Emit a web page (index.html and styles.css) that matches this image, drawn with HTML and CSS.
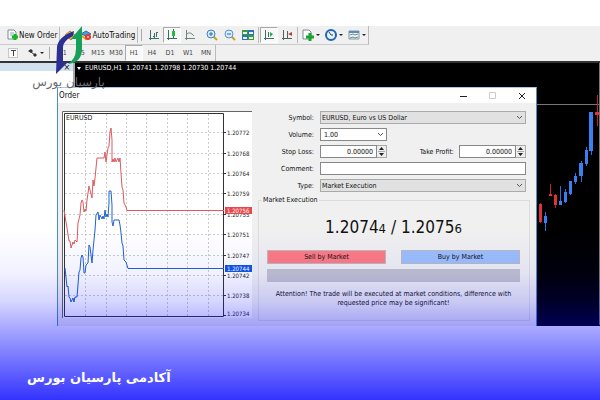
FILE: index.html
```
<!DOCTYPE html>
<html lang="fa">
<head>
  <meta charset="UTF-8">
  <meta name="viewport" content="width=device-width, initial-scale=1.0">
  <title>آکادمی پارسیان بورس</title>
  <link rel="stylesheet" href="styles.css">
</head>
<body>

  <main class="terminal">

    <!-- Main toolbar -->
    <div class="toolbar toolbar-main">
      <button class="tool tool-text">
        <svg width="12" height="12" viewBox="0 0 12 12"><path d="M1 1h6l2 2v7H1z" fill="#fff" stroke="#7c8a99"/><path d="M3 4h4M3 6h3" stroke="#8aa" /><path d="M8 5v6M5 8h6" stroke="#18b52b" stroke-width="3"/></svg>
        New Order
      </button>
      <span class="sep"></span>
      <button class="tool" aria-label="MetaEditor">
        <svg width="12" height="12" viewBox="0 0 12 12"><path d="M1 6l5-4 5 4-4 5z" fill="#f4b942" stroke="#b9801e"/><path d="M4 6l4 1" stroke="#fff2b0"/></svg>
      </button>
      <button class="tool tool-text">
        <svg width="12" height="12" viewBox="0 0 12 12"><path d="M1 5l5-3 5 3-5 2z" fill="#4c9be0" stroke="#2a6db0"/><path d="M2 7l4 3 3-2" fill="none" stroke="#e0a020" stroke-width="2"/><circle cx="8" cy="8" r="3" fill="#e03a2e"/><path d="M7 8h2" stroke="#fff"/></svg>
        AutoTrading
      </button>
      <span class="sep"></span>
      <span class="grip"></span>
      <button class="tool" aria-label="Bar chart">
        <svg width="12" height="12" viewBox="0 0 12 12"><path d="M2.500 1v10M1 9.500h10M6.500 4v5M5 7.500h1M8.500 3v5M9 3.500h1" fill="none" stroke="#3d6f66"/></svg>
      </button>
      <button class="tool pressed" aria-label="Candlesticks">
        <svg width="12" height="12" viewBox="0 0 12 12"><path d="M2.500 1v10M1 9.500h10M7.500 0v9" fill="none" stroke="#3d6f66"/><path d="M6 2h3v5H6z" fill="#1fbf3a"/></svg>
      </button>
      <button class="tool" aria-label="Line chart">
        <svg width="12" height="12" viewBox="0 0 12 12"><path d="M2.500 1v10M1 9.500h10M3 5q3-3 7 2" fill="none" stroke="#6d8580"/></svg>
      </button>
      <button class="tool tool-zoom" aria-label="Zoom in">
        <svg width="12" height="12" viewBox="0 0 12 12"><path d="M7 7l4 4" stroke="#c9a227" stroke-width="2"/><circle cx="5" cy="5" r="4" fill="#d9ecfb" stroke="#3a82c4"/><path d="M3 5h4M5 3v4" stroke="#2a6db0"/></svg>
      </button>
      <button class="tool" aria-label="Zoom out">
        <svg width="12" height="12" viewBox="0 0 12 12"><path d="M7 7l4 4" stroke="#c9a227" stroke-width="2"/><circle cx="5" cy="5" r="4" fill="#d9ecfb" stroke="#5a92c4"/><path d="M3 5h4" stroke="#2a6db0"/></svg>
      </button>
      <button class="tool" aria-label="Tile windows">
        <svg width="12" height="12" viewBox="0 0 12 12"><path d="M0 1h6v5H0zM6 6h6v5H6z" fill="#3c9b3c"/><path d="M6 1h6v5H6zM0 6h6v5H0z" fill="#2f6fc4"/><path d="M1 3h4v2H1zM7 3h4v2H7zM1 8h4v2H1zM7 8h4v2H7z" fill="#e8f4e4"/></svg>
      </button>
      <span class="sep"></span>
      <button class="tool pressed" aria-label="Auto scroll">
        <svg width="12" height="12" viewBox="0 0 12 12"><path d="M2.500 1v10M1 9.500h10M5.500 3v5" fill="none" stroke="#3d6f66"/><path d="M7 3l3 2-3 3z" fill="#2aa84a"/></svg>
      </button>
      <button class="tool" aria-label="Chart shift">
        <svg width="12" height="12" viewBox="0 0 12 12"><path d="M2.500 1v10M1 9.500h10M6.500 2v7" fill="none" stroke="#4f625e"/><path d="M11 3v4L7 5z" fill="#b0453c"/></svg>
      </button>
      <span class="sep"></span>
      <button class="tool tool-menu" aria-label="Indicators">
        <svg width="12" height="12" viewBox="0 0 12 12"><path d="M1 1h6l2 2v7H1z" fill="#fff" stroke="#7c8a99"/><path d="M8 4v8M4 8h8" stroke="#18a52b" stroke-width="3"/></svg>
      </button>
      <button class="tool tool-menu" aria-label="Periods">
        <svg width="12" height="12" viewBox="0 0 12 12"><circle cx="6" cy="6" r="5" fill="#e6f1fc" stroke="#1f66b5" stroke-width="2"/><path d="M4 3l2 3h2" fill="none" stroke="#345"/></svg>
      </button>
      <button class="tool tool-menu" aria-label="Templates">
        <svg width="12" height="12" viewBox="0 0 12 12"><path d="M1 2h10v8H1z" fill="#eef4f8" stroke="#7d97ab"/><path d="M1 2h10v2H1z" fill="#5d8db8"/><path d="M2 6l3-1 2 1 3-1M2 9l3-1 2 1 3-1" fill="none" stroke="#6a8f7a"/></svg>
      </button>
    </div>

    <!-- Timeframes toolbar -->
    <div class="toolbar toolbar-frames">
      <button class="tool tool-label" aria-label="Text label">
        <svg width="10" height="10" viewBox="0 0 10 10"><path d="M.5.5h9v9h-9z" fill="#fafafa" stroke="#999" stroke-dasharray="1 1"/><path d="M3 2.500h5M5.500 3v5" stroke="#444" fill="none"/></svg>
      </button>
      <button class="tool tool-menu tool-arrows" aria-label="Arrows">
        <svg width="10" height="10" viewBox="0 0 10 10"><path d="M0 3l3-2 2 2-2 2zM5 7l2-2 2 2-2 2z" fill="#333"/><path d="M3 4l4 3" stroke="#333"/></svg>
      </button>
      <span class="grip"></span>
      <button class="frame">M1</button>
      <button class="frame">M5</button>
      <button class="frame">M15</button>
      <button class="frame">M30</button>
      <button class="frame pressed">H1</button>
      <button class="frame">H4</button>
      <button class="frame">D1</button>
      <button class="frame">W1</button>
      <button class="frame">MN</button>
    </div>

    <div class="workspace">
      <aside class="market-watch">
        <div class="watch-title"><button class="watch-close" aria-label="Close">×</button></div>
      </aside>
      <div class="chart-title">EURUSD,H1&nbsp; 1.20741 1.20798 1.20730 1.20744</div>

      <svg class="candles" width="63" height="262" viewBox="537 63 63 262">
        <path d="M537 104.500h63" stroke="#777"/>
        <path d="M545.500 212v19M560.500 186v18M565.500 189v14M570.500 181v14M575.500 173v11M581.500 161v21M586.500 147v19M591.500 112v43" stroke="#2f6fe0"/>
        <path d="M540.500 203v20M550.500 184v12M555.500 194v14M597.500 95v31" stroke="#c5202e"/>
        <path d="M544 216h3v7h-3zM559 201h3v4h-3zM564 192h3v10h-3zM569 181h3v13h-3zM574 176h3v6h-3zM579 163h4v13h-4zM585 150h3v14h-3zM589 112h4v39h-4z" fill="#3a80f0"/>
        <path d="M539 204h3v18h-3zM549 194h3v2h-3zM554 195h3v10h-3zM595 112h4v3h-4z" fill="#e0303c"/>
        <path d="M599.500 63v262" stroke="#777"/>
      </svg>

      <!-- Order window -->
      <section class="order">
        <header class="order-title">
          <span>Order</span>
          <button class="win-button" aria-label="Minimize"><svg width="8" height="8" viewBox="0 0 8 8"><path d="M0 4.500h7" stroke="#222"/></svg></button>
          <button class="win-button" aria-label="Maximize" disabled><svg width="8" height="8" viewBox="0 0 8 8"><path d="M.5.5h6v6h-6z" fill="none" stroke="#ccc"/></svg></button>
          <button class="win-button" aria-label="Close"><svg width="8" height="8" viewBox="0 0 8 8"><path d="M1 1l6 6M7 1l-6 6" stroke="#222"/></svg></button>
        </header>

        <div class="order-body">
          <svg class="ticks" width="190" height="207" viewBox="62 111 190 207">
            <path d="M62 111h190v207H62z" fill="#fff"/>
            <path d="M62.500 318V111.500H252" fill="none" stroke="#666"/>
            <path d="M65 132.500h159M65 153.500h159M65 173.500h159M65 193.500h159M65 214.500h159M65 234.500h159M65 255.500h159M65 275.500h159M65 295.500h159M85.500 114v202M106.500 114v202M126.500 114v202M146.500 114v202M167.500 114v202M187.500 114v202M208.500 114v202" stroke="#ccc" stroke-dasharray="2 2"/>
            <path d="M64.500 113.500h159v203h-159z" fill="none" stroke="#333"/>
            <path d="M224 132.500h2M224 153.500h2M224 173.500h2M224 193.500h2M224 214.500h2M224 234.500h2M224 255.500h2M224 275.500h2M224 295.500h2M224 315.500h2" stroke="#333"/>
            <polyline class="ask" points="64,210 67,228 69,241 70,241 71,248 73,242 74,244 75,240 77,242 78,223 80,215 81,203 82,200 83,202 84,212 85,209 86,211 87,200 89,186 90,190 92,198 93,180 94,186 95,178 97,158 104,158 105,152 106,162 108,148 109,146 110,132 111,128 112,140 112,162 113,159 114,162 115,158 116,162 118,158 119,162 120,158 121,173 122,187 123,190 124,203 126,207 127,210.500 224,210.500"/>
            <polyline class="bid" points="65,268 67,287 68,286 69,297 70,298 71,302 73,298 74,302 75,297 77,297 79,272 80,270 81,258 82,255 83,257 84,273 85,273 86,265 88,263 89,245 90,247 92,263 93,250 95,230 96,215 98,212 99,220 100,215 102,219 103,216 104,219 105,210 106,217 107,214 108,217 109,203 109,191 111,191 112,205 112,222 113,226 114,220 119,220 120,225 121,233 122,243 123,246 124,260 126,262 128,268.500 224,268.500"/>
            <g class="scale">
              <text x="66" y="120" class="pair-name">EURUSD</text>
              <text x="227" y="135">1.20772</text>
              <text x="227" y="156">1.20768</text>
              <text x="227" y="176">1.20764</text>
              <text x="227" y="196">1.20759</text>
              <text x="227" y="217">1.20755</text>
              <text x="227" y="237">1.20751</text>
              <text x="227" y="258">1.20747</text>
              <text x="227" y="278">1.20742</text>
              <text x="227" y="298">1.20738</text>
              <text x="227" y="316">1.20734</text>
            </g>
            <path d="M225 207h27v7h-27z" fill="#e8474c"/>
            <path d="M225 265h27v7h-27z" fill="#1257e0"/>
            <g class="scale on-tag">
              <text x="227" y="213">1.20756</text>
              <text x="227" y="271">1.20744</text>
            </g>
          </svg>

          <form class="order-form">
            <div class="fields">
              <label for="symbol">Symbol:</label>
              <select id="symbol" class="grey"><option>EURUSD, Euro vs US Dollar</option></select>

              <label for="volume">Volume:</label>
              <select id="volume" class="short"><option>1.00</option></select>

              <label for="stopLoss">Stop Loss:</label>
              <div class="pair">
                <span class="spin"><input type="text" id="stopLoss" value="0.00000"><button type="button" aria-label="Change stop loss"></button></span>
                <label for="takeProfit">Take Profit:</label>
                <span class="spin"><input type="text" id="takeProfit" value="0.00000"><button type="button" aria-label="Change take profit"></button></span>
              </div>

              <label for="comment">Comment:</label>
              <input type="text" id="comment">

              <label for="type">Type:</label>
              <select id="type" class="grey"><option>Market Execution</option></select>
            </div>

            <fieldset class="execution">
              <legend>Market Execution</legend>
              <p class="price">1.2074<small>4</small> / 1.2075<small>6</small></p>
              <div class="deal">
                <button type="button" class="sell">Sell by Market</button>
                <button type="button" class="buy">Buy by Market</button>
              </div>
              <div class="status"></div>
              <p class="note">Attention! The trade will be executed at market conditions, difference with requested price may be significant!</p>
            </fieldset>
          </form>
        </div>
      </section>
    </div>
  </main>

  <!-- Brand mark over the toolbars -->
  <div class="brand" dir="rtl">
    <svg width="28" height="50" viewBox="54 25 28 50">
      <path d="M73 31Q57 37 56 47L55 74L67 62H62V47Q62 41 72 36z" fill="#2c2e91"/>
      <path d="M81 26V50Q80 63 67 64Q75 58 75 50V39H70z" fill="#16a05a"/>
    </svg>
    <span>پارسیان بورس</span>
  </div>

  <footer class="banner" dir="rtl">
    <h1>آکادمی پارسیان بورس</h1>
  </footer>

</body>
</html>
```

FILE: styles.css
```
/* ===== General Styles ===== */
* {
  box-sizing: border-box;
}

body {
  position: relative;
  margin: 0;
  padding-top: 26px;
  min-height: 100vh;
  display: flex;
  flex-direction: column;
  background-color: #fff;
  font-family: "DejaVu Sans Condensed", "DejaVu Sans", sans-serif;
  font-size: 7px;
  color: #111;
}

/* blue fade over the lower part of the page */
body::after {
  content: "";
  position: absolute;
  left: 0;
  right: 0;
  bottom: 0;
  height: 170px;
  background: linear-gradient(to bottom, rgba(0, 0, 255, 0), rgba(0, 0, 255, 0.05) 25%, rgba(0, 0, 255, 0.16) 42%, rgba(0, 0, 255, 0.32) 56%, rgba(0, 0, 255, 0.8));
  pointer-events: none;
}

button, input, select {
  font: inherit;
  color: inherit;
  margin: 0;
  padding: 0;
}

/* ===== Toolbars ===== */
.terminal {
  background-color: #f0f0f0;
}

.toolbar {
  display: flex;
  align-items: center;
  width: max-content;
  border-right: 1px solid #bbb;
}

.toolbar-main {
  height: 19px;
  padding-left: 6px;
  border-bottom: 1px solid #ccc;
}

.toolbar-frames {
  height: 16px;
  padding-left: 4px;
}

.tool, .frame {
  display: flex;
  align-items: center;
  justify-content: center;
  width: 18px;
  height: 16px;
  border: 1px solid transparent;
  background: none;
}

.tool svg {
  flex: none;
}

.tool-text {
  width: auto;
  font-size: 8px;
  white-space: nowrap;
}

.tool-zoom {
  margin-left: 4px;
}

.tool-menu {
  width: 23px;
  gap: 2px;
}

.tool-menu::after {
  content: "";
  border: 2px solid transparent;
  border-top-color: #222;
  border-bottom: 0;
}

.tool-arrows {
  margin-left: 2px;
}

.frame {
  color: #444;
}

.pressed {
  border-color: #aaa #fff #fff #aaa;
  background-color: #f8f8f8;
}

.sep {
  width: 1px;
  height: 16px;
  margin: 0 1px;
  background-color: #bbb;
}

.grip {
  width: 2px;
  height: 12px;
  border-left: 1px solid #aaa;
  margin: 0 2px;
}

/* ===== Workspace ===== */
.workspace {
  position: relative;
  padding: 24px 63px 0 57px;
  background-color: #000;
  border-top: 2px solid #333;
}

.market-watch {
  position: absolute;
  left: 0;
  top: 0;
  bottom: 0;
  width: 75px;
  background-color: #fff;
  border-right: 2px solid #aaa;
}

.watch-title {
  display: flex;
  justify-content: flex-end;
  height: 8px;
  background-color: #d3e0ee;
}

.watch-close {
  width: 12px;
  border: 0;
  background: none;
  font-size: 9px;
  line-height: 8px;
}

.chart-title {
  position: absolute;
  left: 77px;
  top: 1px;
  color: #fff;
  line-height: 9px;
}

.chart-title::before {
  content: "";
  display: inline-block;
  margin-right: 4px;
  border: 2px solid transparent;
  border-top: 3px solid #fff;
  border-bottom: 0;
  vertical-align: middle;
}

.candles {
  position: absolute;
  right: 0;
  top: 0;
}

/* ===== Order window ===== */
.order {
  position: relative;
  background-color: #f0f0f0;
  border: 1px solid #4a90c8;
  border-top-color: #a5c8e8;
  border-bottom: 0;
}

.order-title {
  display: flex;
  align-items: center;
  gap: 21px;
  height: 15px;
  padding: 0 10px 0 1px;
  background-color: #fff;
  font-size: 8px;
}

.order-title span {
  flex: 1;
}

.win-button {
  display: flex;
  border: 0;
  background: none;
}

.order-body {
  display: flex;
  gap: 6px;
  padding: 8px 6px 5px 4px;
}

.ticks {
  flex: none;
}

.ticks polyline {
  fill: none;
}

.ask {
  stroke: #dc5a5e;
}

.bid {
  stroke: #1f62d0;
}

.scale {
  fill: #222;
  font-size: 6px;
}

.pair-name {
  font-size: 7px;
}

.on-tag {
  fill: #fff;
}

.order-form {
  flex: 1;
}

.fields {
  display: grid;
  grid-template-columns: 56px 1fr;
  grid-auto-rows: 13px;
  align-items: center;
  gap: 4px 6px;
  padding-right: 4px;
}

.fields label {
  text-align: right;
  white-space: nowrap;
}

.fields input, .fields select {
  width: 100%;
  height: 13px;
  padding: 0 3px;
  border: 1px solid #888;
  border-radius: 0;
  background-color: #fff;
}

.fields select {
  appearance: none;
  padding: 0 1px;
  background-image: url("data:image/svg+xml,%3Csvg xmlns='http://www.w3.org/2000/svg' width='7' height='5'%3E%3Cpath d='M1 1l2.500 2.500L6 1' fill='none' stroke='%23555'/%3E%3C/svg%3E");
  background-repeat: no-repeat;
  background-position: right 2px center;
}

.fields .grey {
  background-color: #e1e1e1;
  border-color: #aaa;
}

.fields .short {
  width: 67px;
  padding-left: 3px;
}

.pair {
  display: flex;
  align-items: center;
  justify-content: space-between;
}

.pair label {
  margin-left: auto;
  margin-right: 5px;
}

.spin {
  display: flex;
  width: 67px;
}

.spin input {
  flex: 1;
  min-width: 0;
  text-align: right;
}

.spin button {
  width: 10px;
  border: 1px solid #aaa;
  border-left: 0;
  background: #eee url("data:image/svg+xml,%3Csvg xmlns='http://www.w3.org/2000/svg' width='7' height='9'%3E%3Cpath d='M1 3l2.500-3L6 3zM1 6l2.500 3L6 6z' fill='%23222'/%3E%3Cpath d='M0 4.500h7' stroke='%23aaa'/%3E%3C/svg%3E") no-repeat center;
}

/* ===== Market execution ===== */
.execution {
  margin: 4px 0 0;
  padding: 12px 9px 12px 8px;
  border: 1px solid #ddd;
  min-width: 0;
}

.execution legend {
  margin-left: -5px;
  padding: 0 1px;
  line-height: 9px;
}

.price {
  margin: 0 0 11px;
  font-size: 17px;
  line-height: 20px;
  text-align: center;
}

.price small {
  font-size: 13px;
}

.deal {
  display: flex;
  gap: 15px;
}

.deal button {
  flex: 1;
  height: 14px;
  border: 1px solid #bbb;
}

.sell {
  background-color: #ff7b80;
}

.buy {
  background-color: #9dbffa;
}

.status {
  height: 13px;
  margin-top: 5px;
  background-color: #c2c2cc;
}

.note {
  margin: 8px 8px 0;
  line-height: 9px;
  text-align: center;
}

/* ===== Brand ===== */
.brand {
  position: absolute;
  left: 34px;
  top: 25px;
  width: 69px;
  display: flex;
  flex-direction: column;
  align-items: center;
  color: #6b6b6b;
  font-family: "DejaVu Sans", sans-serif;
  font-size: 12px;
  line-height: 14px;
  white-space: nowrap;
}

/* ===== Banner ===== */
.banner {
  flex: 1;
  display: flex;
  align-items: center;
  justify-content: flex-end;
  padding: 29px 27px 0;
}

.banner h1 {
  position: relative;
  z-index: 1;
  margin: 0;
  color: #fff;
  font-family: "DejaVu Sans", sans-serif;
  font-size: 13px;
  line-height: 20px;
}
```
